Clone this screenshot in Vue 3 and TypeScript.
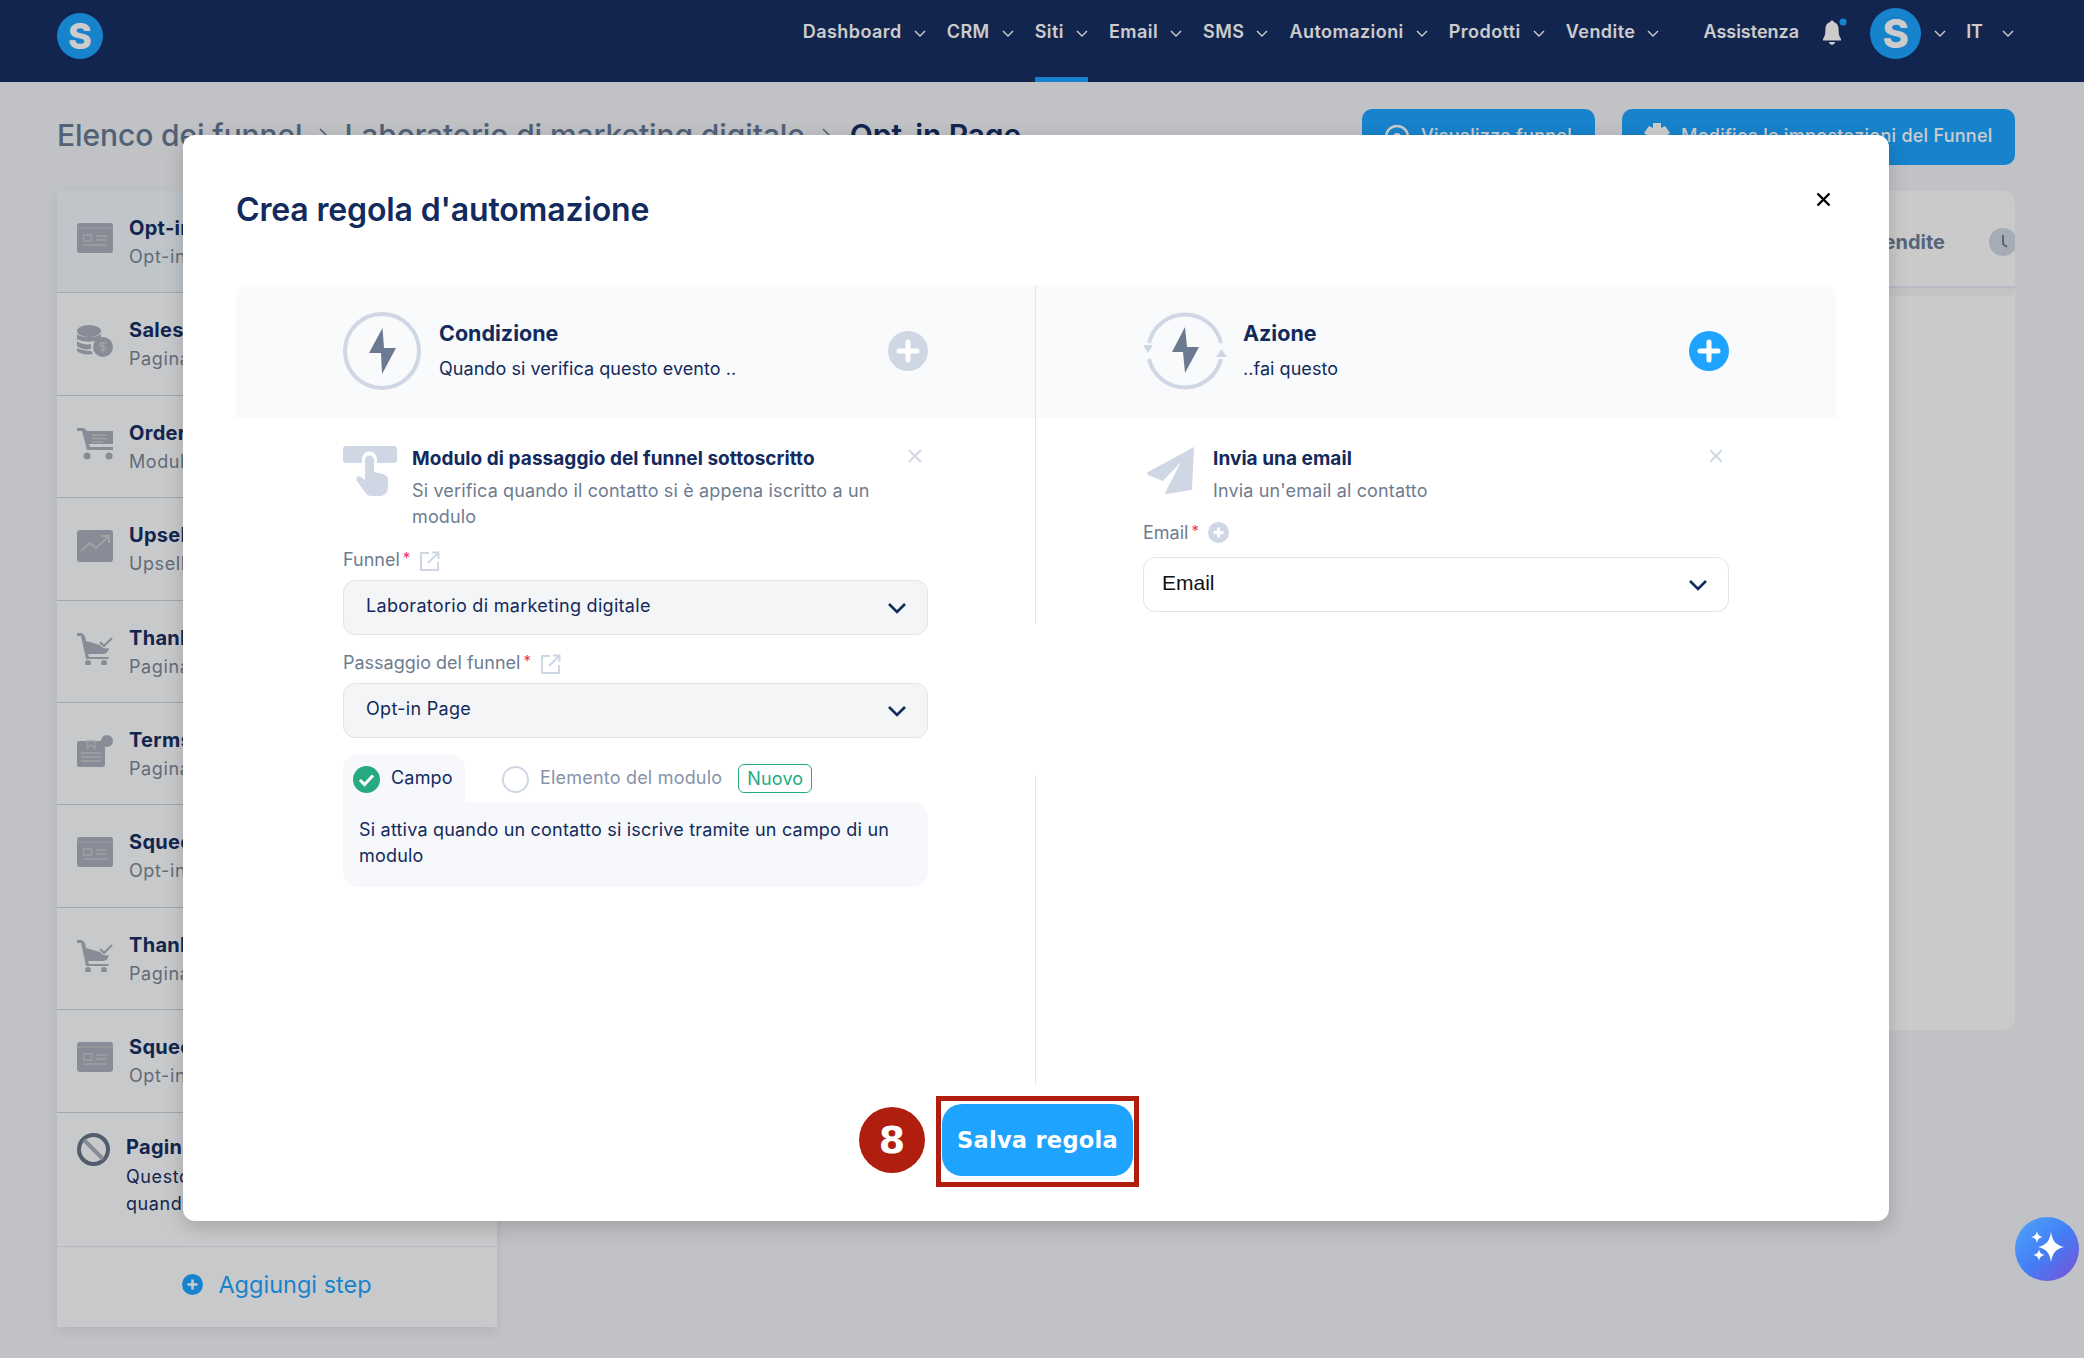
<script setup lang="ts">
type Step = { title: string; sub: string; icon: string; active?: boolean };

const navItems = ['Dashboard', 'CRM', 'Siti', 'Email', 'SMS', 'Automazioni', 'Prodotti', 'Vendite'];

const steps: Step[] = [
  { title: 'Opt-in Page', sub: 'Opt-in', icon: 'page', active: true },
  { title: 'Sales Page', sub: 'Pagina di vendita', icon: 'coins' },
  { title: 'Order Form', sub: 'Modulo ordine', icon: 'cart' },
  { title: 'Upsell Page', sub: 'Upsell', icon: 'chart' },
  { title: 'Thank You', sub: 'Pagina di ringraziamento', icon: 'cartcheck' },
  { title: 'Terms', sub: 'Pagina dei termini', icon: 'terms' },
  { title: 'Squeeze Page', sub: 'Opt-in', icon: 'page' },
  { title: 'Thank You', sub: 'Pagina di ringraziamento', icon: 'cartcheck' },
  { title: 'Squeeze Page', sub: 'Opt-in', icon: 'page' },
];
</script>

<template>
  <div class="page">
    <header class="topbar">
      <div class="logo">S</div>
      <nav class="nav">
        <div v-for="item in navItems" :key="item" class="nav-item" :class="{ active: item === 'Siti' }">
          <span>{{ item }}</span>
          <svg class="chev" viewBox="0 0 12 7"><path d="M1 1l5 5 5-5" /></svg>
        </div>
      </nav>
      <div class="nav-right">
        <span class="assist">Assistenza</span>
        <svg class="bell" viewBox="0 0 26 28">
          <path d="M11 2.500c-1 0-1.600.7-1.700 1.600C5.600 5.200 4.400 8 4.400 12c0 4-.8 7-2.400 9v1.500h18V21c-1.600-2-2.400-5-2.400-9 0-4-1.200-6.800-4.900-7.900C12.600 3.200 12 2.500 11 2.500z" fill="#fff" />
          <path d="M8 24h6c0 1.600-1.300 2.800-3 2.800S8 25.600 8 24z" fill="#fff" />
          <circle cx="22" cy="4" r="3.500" fill="#1da4ff" />
        </svg>
        <div class="avatar">S</div>
        <svg class="chev" viewBox="0 0 12 7"><path d="M1 1l5 5 5-5" /></svg>
        <span class="lang">IT</span>
        <svg class="chev" viewBox="0 0 12 7"><path d="M1 1l5 5 5-5" /></svg>
      </div>
    </header>

    <main class="content">
      <div class="crumbs-row">
        <div class="crumbs">
          <span>Elenco dei funnel</span>
          <svg class="crumb-sep" viewBox="0 0 10 16"><path d="M2 2l6 6-6 6" /></svg>
          <span>Laboratorio di marketing digitale</span>
          <svg class="crumb-sep" viewBox="0 0 10 16"><path d="M2 2l6 6-6 6" /></svg>
          <b>Opt-in Page</b>
        </div>
        <div class="top-actions">
          <button class="top-btn view">
            <svg class="btn-icon" viewBox="0 0 28 28">
              <circle cx="14" cy="14" r="11" fill="none" stroke="#fff" stroke-width="2.500" />
              <circle cx="14" cy="14" r="4" fill="#fff" />
            </svg>
            <span>Visualizza funnel</span>
          </button>
          <button class="top-btn edit">
            <svg class="btn-icon" viewBox="0 0 28 28">
              <path d="M10 0h8v5l4-2 5 7-4 3v3l4 3-5 7-4-2v4h-8v-4l-4 2-5-7 4-3v-3L1 10l5-7 4 2z" fill="#fff" />
            </svg>
            <span>Modifica le impostazioni del Funnel</span>
          </button>
        </div>
      </div>

      <div class="workspace">
        <aside class="sidebar">
          <div v-for="(s, i) in steps" :key="i" class="step" :class="{ active: s.active }">
            <svg class="step-icon" viewBox="0 0 36 32" fill="#a9b0bd">
              <template v-if="s.icon === 'page'">
                <rect width="36" height="30" rx="3" />
                <path d="M0 5h36" stroke="#c5c7cb" stroke-width="1" />
                <path d="M19 13h11M19 17h11M6 22h24" stroke="#c5c7cb" stroke-width="1.500" />
                <rect x="6.500" y="12" width="8" height="6" fill="none" stroke="#c5c7cb" stroke-width="1.500" />
              </template>
              <template v-else-if="s.icon === 'coins'">
                <ellipse cx="12" cy="6" rx="12" ry="6" />
                <path d="M0 9c3 4 20 4 24 0v5c-8 4-20 3-24 0zM0 16c3 3 10 4 14 3v5c-5 1-11 0-14-3zM0 23c3 2 9 3 14 3l2 3c-6 1-13 0-16-3z" />
                <circle cx="26" cy="22" r="10" />
                <path d="M29 18.500c-2-1.500-6-1-6 1.200 0 2.600 6 1.200 6 4 0 2-4 2.500-6 1M26 16.500v11" stroke="#c9cacb" stroke-width="1.500" fill="none" />
              </template>
              <template v-else-if="s.icon === 'cart'">
                <path d="M0 0h7l3 3h26v13H12l1 3h23v3H10L5 3H0z" />
                <path d="M15 7h15M15 10.500h15M15 14h11" stroke="#c9cacb" stroke-width="1.300" />
                <circle cx="10" cy="28" r="3.500" />
                <circle cx="32" cy="28" r="3.500" />
              </template>
              <template v-else-if="s.icon === 'chart'">
                <rect width="36" height="32" rx="3" />
                <path d="M4 21l9-8 6 5 12-11M24 6h8v7" fill="none" stroke="#ccc" stroke-width="2" />
              </template>
              <template v-else-if="s.icon === 'cartcheck'">
                <path d="M0 0h5l3 3 1 5 14 4c2 3 5 4 9 3-1 4-3 6-6 6H11l1 3h20l-1 2H9L4 3H0z" />
                <path d="M23 9l4 4 8-8" fill="none" stroke="#a9b0bd" stroke-width="2.200" />
                <circle cx="11" cy="30" r="3" />
                <circle cx="27" cy="30" r="3" />
              </template>
              <template v-else>
                <rect y="6" width="28" height="26" rx="2" />
                <path d="M4 18h20M4 22h20M4 26h20" stroke="#c9cacb" stroke-width="1.300" />
                <path d="M10 6h8v7l-4-3-4 3z" fill="none" stroke="#c9cacb" stroke-width="1.300" />
                <circle cx="30" cy="6" r="6" />
              </template>
            </svg>
            <div class="step-text">
              <div class="step-title">{{ s.title }}</div>
              <div class="step-sub">{{ s.sub }}</div>
            </div>
          </div>
          <div class="step blocked">
            <svg class="blocked-icon" viewBox="0 0 33 33">
              <circle cx="16.500" cy="16.500" r="14.500" fill="none" stroke="#667487" stroke-width="4" />
              <path d="M7 7l19 19" stroke="#a9b0bd" stroke-width="4" />
            </svg>
            <div class="step-text">
              <div class="step-title">Pagina non visibile</div>
              <div class="step-desc">Questo step viene mostrato quando il funnel è attivo</div>
            </div>
          </div>
          <div class="add-step">
            <svg class="add-icon" viewBox="0 0 21 21">
              <circle cx="10.500" cy="10.500" r="10.500" fill="#1da4ff" />
              <path d="M10.500 5.500v10M5.500 10.500h10" stroke="#fff" stroke-width="2.500" />
            </svg>
            <span>Aggiungi step</span>
          </div>
        </aside>

        <section class="panel">
          <div class="panel-tabs">
            <span class="panel-tab">Vendite</span>
            <span class="clock">
              <svg viewBox="0 0 28 28"><path d="M14 7v9l4 3" /></svg>
            </span>
          </div>
          <div class="panel-strip"></div>
        </section>
      </div>
    </main>

    <div class="overlay">
      <div class="modal">
        <h2 class="modal-title">Crea regola d'automazione</h2>
        <svg class="modal-close" viewBox="0 0 15 15"><path d="M1.500 1.500l12 12M13.500 1.500l-12 12" /></svg>

        <div class="columns">
          <div class="col left">
            <div class="band">
              <svg class="band-icon" viewBox="0 0 78 78">
                <circle cx="39" cy="39" r="37" fill="none" stroke="#cfd7e4" stroke-width="4" />
                <path d="M39.500 16L26 41h12l1 21 14-26H41z" fill="#6b7a90" />
              </svg>
              <div class="band-text">
                <div class="band-title">Condizione</div>
                <div class="band-sub">Quando si verifica questo evento ..</div>
              </div>
              <svg class="band-plus" viewBox="0 0 40 40">
                <circle cx="20" cy="20" r="20" fill="#cfd7e4" />
                <path d="M20 11v18M11 20h18" stroke="#fff" stroke-width="5" stroke-linecap="round" />
              </svg>
            </div>
            <div class="col-body">
              <div class="item">
                <svg class="item-icon" viewBox="0 0 54 50">
                  <path d="M3 0h48a3 3 0 0 1 3 3v11a3 3 0 0 1-3 3H34v-4a7.500 7.500 0 0 0-15 0v4H3a3 3 0 0 1-3-3V3a3 3 0 0 1 3-3z" fill="#cfd7e4" />
                  <path d="M22 14a4.500 4.500 0 0 1 9 0v12l9 2c3 1 5 3 5 6v7c0 5-3 9-8 9h-8c-4 0-6-2-8-5l-7-10c-2-3 1-6 4-4l4 3z" fill="#cfd7e4" />
                </svg>
                <div class="item-text">
                  <div class="item-title">Modulo di passaggio del funnel sottoscritto</div>
                  <div class="item-desc">Si verifica quando il contatto si è appena iscritto a un modulo</div>
                </div>
                <svg class="item-close" viewBox="0 0 14 14"><path d="M1 1l12 12M13 1L1 13" /></svg>
              </div>

              <div class="label">
                <span>Funnel</span><i>*</i>
                <svg class="ext" viewBox="0 0 20 20"><path d="M9 2H1v17h17v-8M8 12L18 2M12 1.500h6.500V8" /></svg>
              </div>
              <div class="select filled">
                <span>Laboratorio di marketing digitale</span>
                <svg class="sel-chev" viewBox="0 0 20 12"><path d="M2 2l8 8 8-8" /></svg>
              </div>

              <div class="label second">
                <span>Passaggio del funnel</span><i>*</i>
                <svg class="ext" viewBox="0 0 20 20"><path d="M9 2H1v17h17v-8M8 12L18 2M12 1.500h6.500V8" /></svg>
              </div>
              <div class="select filled">
                <span>Opt-in Page</span>
                <svg class="sel-chev" viewBox="0 0 20 12"><path d="M2 2l8 8 8-8" /></svg>
              </div>

              <div class="tabs">
                <div class="tab on">
                  <svg class="radio" viewBox="0 0 27 27">
                    <circle cx="13.500" cy="13.500" r="13.500" fill="#25ab7f" />
                    <path d="M7 14l4.500 4.500L20 9.500" fill="none" stroke="#fff" stroke-width="3" />
                  </svg>
                  <span>Campo</span>
                </div>
                <div class="tab off">
                  <svg class="radio" viewBox="0 0 27 27">
                    <circle cx="13.500" cy="13.500" r="12.500" fill="none" stroke="#cfd7e4" stroke-width="2" />
                  </svg>
                  <span>Elemento del modulo</span>
                  <span class="badge">Nuovo</span>
                </div>
              </div>
              <div class="tab-body">Si attiva quando un contatto si iscrive tramite un campo di un modulo</div>
            </div>
          </div>

          <div class="col right">
            <div class="band">
              <svg class="band-icon action" viewBox="0 0 84 80">
                <path d="M6 32a37 37 0 0 1 72 0M78 48a37 37 0 0 1-72 0" fill="none" stroke="#cfd7e4" stroke-width="4" />
                <path d="M0 34h10l-5 8zM73 46h11l-5.500-8z" fill="#cfd7e4" />
                <path d="M42 16L29 41h11l2 21 14-26H44z" fill="#6b7a90" />
              </svg>
              <div class="band-text">
                <div class="band-title">Azione</div>
                <div class="band-sub">..fai questo</div>
              </div>
              <svg class="band-plus" viewBox="0 0 40 40">
                <circle cx="20" cy="20" r="20" fill="#1ea3ff" />
                <path d="M20 11v18M11 20h18" stroke="#fff" stroke-width="5" stroke-linecap="round" />
              </svg>
            </div>
            <div class="col-body">
              <div class="item action-item">
                <svg class="send-icon" viewBox="0 0 49 48">
                  <path d="M48 1L2 26c-1 1-1 2 0 3l15 6 18-19-16 31c0 1 1 1 2 1l24-4c1 0 1-1 1-1z" fill="#cfd7e4" />
                </svg>
                <div class="item-text">
                  <div class="item-title">Invia una email</div>
                  <div class="item-desc">Invia un'email al contatto</div>
                </div>
                <svg class="item-close" viewBox="0 0 14 14"><path d="M1 1l12 12M13 1L1 13" /></svg>
              </div>

              <div class="label">
                <span>Email</span><i>*</i>
                <svg class="label-plus" viewBox="0 0 21 21">
                  <circle cx="10.500" cy="10.500" r="10.500" fill="#cfd7e4" />
                  <path d="M10.500 5.500v10M5.500 10.500h10" stroke="#fff" stroke-width="3" />
                </svg>
              </div>
              <div class="select plain">
                <span>Email</span>
                <svg class="sel-chev" viewBox="0 0 20 12"><path d="M2 2l8 8 8-8" /></svg>
              </div>
            </div>
          </div>
        </div>

        <div class="footer">
          <div class="save-wrap">
            <span class="step-badge">8</span>
            <div class="save-frame">
              <button class="save-btn">Salva regola</button>
            </div>
          </div>
        </div>
      </div>
    </div>

    <button class="assistant">
      <svg viewBox="0 0 64 64">
        <path d="M36 11c1.500 9 4.500 13 13 15-8.500 2-11.500 6-13 15-1.500-9-4.500-13-13-15 8.500-2 11.500-6 13-15z" fill="#fff" transform="translate(0 4)" />
        <path d="M22 14c.7 4 2.300 5.300 6 6-3.700.7-5.300 2-6 6-.7-4-2.300-5.300-6-6 3.700-.7 5.300-2 6-6zM24 32c.7 4 2.300 5.300 6 6-3.700.7-5.300 2-6 6-.7-4-2.300-5.300-6-6 3.700-.7 5.300-2 6-6z" fill="#fff" />
      </svg>
    </button>
  </div>
</template>

<style>
html, body {
  background: #f1f3f8;
}
</style>

<style scoped>
.page {
  position: relative;
  width: 2084px;
  height: 1358px;
  overflow: hidden;
  background: #f1f3f8;
  font-family: Inter, "Liberation Sans", sans-serif;
  color: #122a5c;
}

.topbar {
  display: flex;
  height: 82px;
  padding: 0 70px 0 57px;
  background: #172f63;
  color: #fff;
  box-sizing: border-box;
}

.logo {
  width: 46px;
  height: 46px;
  margin-top: 13px;
  border-radius: 50%;
  background: #1da4ff;
  color: #fff;
  font-size: 36px;
  font-weight: 800;
  line-height: 46px;
  text-align: center;
}

.nav {
  display: flex;
  gap: 21px;
  margin-left: auto;
}

.nav-item {
  display: flex;
  align-items: flex-start;
  gap: 12px;
  height: 82px;
  padding-top: 21px;
  box-sizing: border-box;
  border-bottom: 5px solid transparent;
  font-size: 18px;
  font-weight: 600;
  line-height: 22px;
  letter-spacing: 0.45px;
}

.nav-item.active {
  border-bottom-color: #1da4ff;
}

.chev {
  width: 12px;
  height: 7px;
  margin-top: 9px;
  fill: none;
  stroke: #fff;
  stroke-width: 1.4;
  flex: none;
}

.nav-right {
  display: flex;
  align-items: flex-start;
  margin-left: 44px;
  font-size: 18px;
  font-weight: 600;
  line-height: 22px;
}

.assist {
  padding-top: 21px;
}

.bell {
  width: 26px;
  height: 28px;
  margin: 18px 0 0 22px;
}

.avatar {
  width: 51px;
  height: 51px;
  margin: 8px 0 0 23px;
  border-radius: 50%;
  background: #1da4ff;
  font-size: 40px;
  font-weight: 800;
  line-height: 51px;
  text-align: center;
}

.nav-right .chev {
  margin: 30px 0 0 13px;
}

.nav-right .lang {
  padding: 21px 0 0 20px;
}

.nav-right .lang + .chev {
  margin-left: 19px;
}

.content {
  padding: 0 69px 0 57px;
}

.crumbs-row {
  display: flex;
  justify-content: space-between;
  height: 109px;
  padding-top: 27px;
  box-sizing: border-box;
}

.crumbs {
  display: flex;
  align-items: center;
  gap: 16px;
  height: 52px;
  font-size: 30px;
  font-weight: 500;
  letter-spacing: -0.1px;
  color: #667a94;
}

.crumbs b {
  margin-left: 3px;
  color: #172f63;
  font-weight: 600;
}

.crumb-sep {
  width: 10px;
  height: 16px;
  fill: none;
  stroke: #667a94;
  stroke-width: 1.6;
}

.top-actions {
  display: flex;
  gap: 27px;
}

.top-btn {
  display: flex;
  align-items: center;
  height: 56px;
  padding: 0 0 4px 21px;
  box-sizing: border-box;
  border: 0;
  border-radius: 10px;
  background: #1da4ff;
  color: #fff;
  font: 500 18px Inter, sans-serif;
  letter-spacing: 0.25px;
}

.top-btn.view {
  width: 233px;
}

.top-btn.edit {
  width: 393px;
}

.btn-icon {
  width: 28px;
  height: 28px;
  flex: none;
  margin: 4px 10px 0 0;
}

.workspace {
  display: flex;
  gap: 24px;
  align-items: flex-start;
}

.sidebar {
  width: 440px;
  flex: none;
  background: #fbfcfe;
  box-shadow: 0 4px 12px rgba(0, 0, 0, 0.08);
}

.step {
  display: flex;
  gap: 16px;
  height: 102.400px;
  padding: 32px 0 0 20px;
  box-sizing: border-box;
  border-bottom: 1px solid #cbd3e0;
}

.step.active {
  background: #f0f7fc;
}

.step-icon {
  width: 36px;
  height: 32px;
  flex: none;
}

.step-title {
  margin-top: -8px;
  font-size: 20px;
  font-weight: 700;
  line-height: 26px;
  letter-spacing: 0.3px;
  color: #172f63;
}

.step-sub {
  margin-top: 3px;
  font-size: 18px;
  line-height: 26px;
  letter-spacing: 0.6px;
  color: #7a8799;
}

.step.blocked {
  height: 134px;
  padding-top: 20px;
  border-bottom: 1px solid #e4e6ea;
}

.step.blocked .step-title {
  margin-top: 1px;
}

.blocked-icon {
  width: 33px;
  height: 33px;
  flex: none;
}

.step-desc {
  width: 280px;
  margin-top: 3px;
  font-size: 18px;
  line-height: 27px;
  letter-spacing: 0.6px;
  color: #172f63;
}

.add-step {
  display: flex;
  align-items: center;
  justify-content: center;
  gap: 15px;
  height: 80px;
  padding-bottom: 4px;
  box-sizing: border-box;
  font-size: 23.500px;
  color: #1da4ff;
}

.add-icon {
  width: 21px;
  height: 21px;
}

.panel {
  flex: 1;
  height: 839px;
  border-radius: 10px;
  background: #fdfdfe;
  overflow: hidden;
}

.panel-tabs {
  display: flex;
  justify-content: flex-end;
  align-items: center;
  gap: 44px;
  height: 97px;
  margin-right: -2px;
  padding-top: 6px;
  box-sizing: border-box;
  border-bottom: 2px solid #e7e9f6;
}

.panel-tab {
  font-size: 20px;
  font-weight: 700;
  color: #6d7f97;
}

.clock {
  width: 28px;
  height: 28px;
  border-radius: 50%;
  background: #cfd7e4;
}

.clock svg {
  display: block;
  fill: none;
  stroke: #6d7f97;
  stroke-width: 2;
}

.panel-strip {
  height: 8px;
  border-radius: 0 0 8px 8px;
  background: #f4f4f5;
}

.overlay {
  position: absolute;
  inset: 0;
  background: rgba(0, 0, 0, 0.2);
}

.modal {
  position: absolute;
  left: 183px;
  top: 135px;
  width: 1706px;
  height: 1086px;
  padding: 0 53px;
  box-sizing: border-box;
  border-radius: 12px;
  background: #fff;
  box-shadow: 0 6px 20px rgba(0, 0, 0, 0.18);
}

.modal-title {
  margin: 0;
  padding-top: 55px;
  height: 150px;
  box-sizing: border-box;
  font-size: 32px;
  font-weight: 600;
  line-height: 40px;
  letter-spacing: -0.15px;
  color: #122a5c;
}

.modal-close {
  position: absolute;
  top: 57px;
  right: 58px;
  width: 15px;
  height: 15px;
  fill: none;
  stroke: #000;
  stroke-width: 2.4;
}

.columns {
  display: flex;
  height: 800px;
}

.col {
  flex: 1;
  min-width: 0;
}

.col.left {
  flex: 0 0 799px;
}

/* the divider stops around the tab block, so it is two painted pieces */
.col.right {
  padding-left: 1px;
  background:
    linear-gradient(#e3e6ea, #e3e6ea) 0 0 / 1px 338px no-repeat,
    linear-gradient(#e3e6ea, #e3e6ea) 0 490px / 1px 310px no-repeat;
}

.band {
  display: flex;
  align-items: center;
  height: 133px;
  padding: 0 107px 2px;
  box-sizing: border-box;
  background: #f9fafc;
}

.col.left .band {
  border-radius: 12px 0 0 0;
}

.col.right .band {
  border-radius: 0 12px 0 0;
}

.band-icon {
  width: 78px;
  height: 78px;
  flex: none;
  margin-right: 18px;
}

.band-icon.action {
  width: 84px;
  height: 80px;
  margin-right: 16px;
}

.band-text {
  flex: 1;
}

.band-title {
  font-size: 21.500px;
  font-weight: 700;
  line-height: 28px;
  color: #122a5c;
}

.band-sub {
  margin-top: 8px;
  font-size: 18px;
  line-height: 28px;
  letter-spacing: 0.05px;
  color: #122a5c;
}

.band-plus {
  width: 40px;
  height: 40px;
  flex: none;
}

.col-body {
  padding: 28px 107px 0;
}

.item {
  position: relative;
  display: flex;
  gap: 15px;
  min-height: 100px;
  box-sizing: border-box;
}

.item.action-item {
  min-height: 73px;
  gap: 16px;
}

.item-icon {
  width: 54px;
  height: 50px;
  flex: none;
}

.send-icon {
  width: 49px;
  height: 48px;
  flex: none;
  margin: 0 2px 0 3px;
}

.item-text {
  flex: 1;
  padding-right: 30px;
}

.item-title {
  margin-top: 1px;
  font-size: 19px;
  font-weight: 700;
  line-height: 24px;
  letter-spacing: 0.05px;
  color: #122a5c;
}

.item-desc {
  margin-top: 7px;
  font-size: 18px;
  line-height: 26px;
  letter-spacing: 0.15px;
  color: #6e7c90;
}

.item-close {
  position: absolute;
  top: 3px;
  right: 6px;
  width: 14px;
  height: 14px;
  fill: none;
  stroke: #cfd7e4;
  stroke-width: 2;
}

.label {
  display: flex;
  align-items: center;
  height: 26px;
  font-size: 18px;
  color: #6e7c90;
}

.label.second {
  margin-top: 14px;
}

.label i {
  margin: -4px 0 0 3px;
  font-style: normal;
  font-size: 15px;
  color: #f5305f;
}

.ext {
  width: 20px;
  height: 20px;
  margin: 4px 0 0 10px;
  fill: none;
  stroke: #cfd7e4;
  stroke-width: 2;
}

.label-plus {
  width: 21px;
  height: 21px;
  margin-left: 9px;
}

.select {
  display: flex;
  align-items: center;
  justify-content: space-between;
  height: 55px;
  margin-top: 8px;
  padding: 0 20px 4px 22px;
  box-sizing: border-box;
  border: 1px solid #e1e4e8;
  border-radius: 12px;
}

.select.filled {
  background: #f4f5f6;
  font-size: 18px;
  letter-spacing: 0.3px;
  color: #122a5c;
}

.select.plain {
  margin-top: 12px;
  padding: 0 20px 4px 18px;
  font-family: "Liberation Sans", sans-serif;
  font-size: 21px;
  color: #111;
}

.sel-chev {
  width: 20px;
  height: 12px;
  margin-top: 5px;
  fill: none;
  stroke: #122a5c;
  stroke-width: 2.600;
}

.tabs {
  display: flex;
  height: 47px;
  margin-top: 17px;
}

.tab {
  display: flex;
  align-items: flex-start;
  padding-top: 11px;
  box-sizing: border-box;
  font-size: 18px;
  line-height: 24px;
  letter-spacing: 0.2px;
}

.tab.on {
  width: 122px;
  padding-left: 10px;
  gap: 11px;
  border-radius: 14px 14px 0 0;
  background: #f6f8fb;
  color: #122a5c;
}

.tab.off {
  margin-left: 37px;
  gap: 11px;
  color: #8793a8;
}

.radio {
  width: 27px;
  height: 27px;
  flex: none;
}

.badge {
  width: 74px;
  height: 29px;
  margin: -2px 0 0 5px;
  box-sizing: border-box;
  border: 1px solid #25ab7f;
  border-radius: 6px;
  color: #25ab7f;
  line-height: 27px;
  text-align: center;
}

.tab-body {
  height: 85px;
  padding: 15px 16px 0;
  box-sizing: border-box;
  border-radius: 0 16px 16px 16px;
  background: #f6f8fb;
  font-size: 18px;
  line-height: 26px;
  letter-spacing: 0.2px;
  color: #122a5c;
}

.footer {
  display: flex;
  justify-content: center;
  padding: 11px 0 0 3px;
}

.save-wrap {
  position: relative;
}

.save-frame {
  width: 203px;
  height: 91px;
  padding: 3px 0 0 1px;
  box-sizing: border-box;
  border: 5px solid #b01e10;
}

.save-btn {
  display: block;
  width: 191px;
  height: 72px;
  border: 0;
  border-radius: 20px;
  background: #1ea3ff;
  color: #fff;
  font: 700 22.500px "DejaVu Sans", sans-serif;
  letter-spacing: 0.3px;
}

.step-badge {
  position: absolute;
  left: -77px;
  top: 11px;
  width: 66px;
  height: 66px;
  border-radius: 50%;
  background: #b01e10;
  color: #fff;
  font: 700 38px/66px "DejaVu Sans", sans-serif;
  text-align: center;
}

.assistant {
  position: absolute;
  left: 2015px;
  top: 1217px;
  width: 64px;
  height: 64px;
  padding: 0;
  border: 0;
  border-radius: 50%;
  background: linear-gradient(135deg, #4fa8f8 0%, #437ef6 50%, #7a50d6 100%);
}

.assistant svg {
  display: block;
}
</style>
